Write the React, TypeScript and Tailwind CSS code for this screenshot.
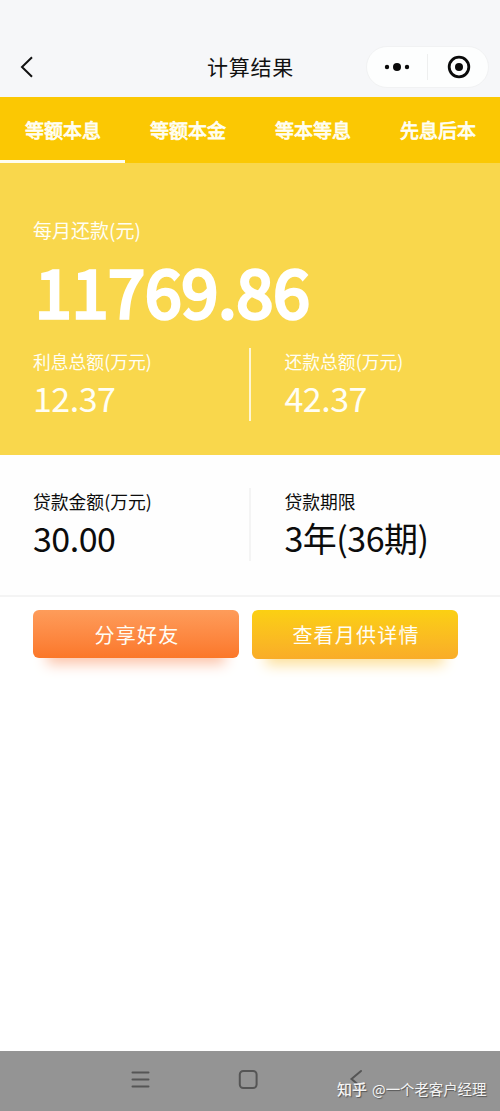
const tabs = ["等额本息", "等额本金", "等本等息", "先息后本"];

type StatProps = {
    label: string;
    value: string;
};

const Stat = ({ label, value }: StatProps) => (
    <div>
        <p className="text-[17.8px] leading-[26px] whitespace-nowrap">{label}</p>
        <p className="mt-[4px] text-[34px] leading-[40px] tracking-[-0.5px] whitespace-nowrap">{value}</p>
    </div>
);

const Header = () => (
    <header className="flex h-[97px] items-end justify-between bg-[#f6f7f9] pr-[11px] pb-[9px] pl-[20px]">
        <div className="flex h-[42px] w-[115px] items-center">
            <svg width="14" height="22" viewBox="0 0 14 22" fill="none" stroke="#111" strokeWidth="2">
                <path d="M12 1.2 2 11l10 9.8" />
            </svg>
        </div>
        <h1 className="mb-[6px] text-[21px] leading-[32px] tracking-[0.7px] text-[#111]">计算结果</h1>
        <div className="flex h-[42px] w-[123px] items-center rounded-full border border-[#f1f2f3] bg-[#fdfefe]">
            <div className="flex w-[60px] justify-center">
                <svg width="26" height="10" viewBox="0 0 26 10" fill="#0a0a0a">
                    <circle cx="3" cy="5" r="2.2" />
                    <circle cx="13" cy="5" r="4" />
                    <circle cx="23" cy="5" r="2.2" />
                </svg>
            </div>
            <div className="h-[26px] w-px bg-[#eeefef]" />
            <div className="flex flex-1 justify-center pl-[2px]">
                <svg width="24" height="24" viewBox="0 0 24 24">
                    <circle cx="12" cy="12" r="9.8" fill="none" stroke="#0a0a0a" strokeWidth="2.8" />
                    <circle cx="12" cy="12" r="4" fill="#0a0a0a" />
                </svg>
            </div>
        </div>
    </header>
);

const NavBar = () => (
    <nav className="relative h-[60px] bg-[#949494]">
        <svg className="block" width="500" height="60" viewBox="0 0 500 60" fill="none" stroke="#555" strokeWidth="2" strokeLinecap="round">
            <path d="M132.500 21.500h16M132.500 28.500h16M132.500 35.500h16" />
            <rect x="239.800" y="20" width="16.800" height="17" rx="3.500" />
            <path d="M361 20 351.500 28 361 36" />
        </svg>
        <p className="absolute top-[27px] left-[337px] flex items-center text-[14.4px] leading-[22px] whitespace-nowrap text-[#f4f4f4] [text-shadow:1px_1px_1px_#555]">
            <span className="mr-[5px] text-[15px] font-medium">知乎</span>
            <span>@一个老客户经理</span>
        </p>
    </nav>
);

const App = () => {
    return (
        <div className="flex h-[1111px] w-[500px] flex-col overflow-hidden bg-white font-['Noto_Sans_CJK_SC',sans-serif]">
            <Header />

            <div className="grid h-[66px] grid-cols-4 bg-[#fbc803] text-[#fffef4]">
                {tabs.map((tab, index) => (
                    <div
                        key={tab}
                        className={`flex items-center justify-center border-b-[3px] pt-[3px] pl-px text-[19px] [-webkit-text-stroke:0.8px_#fffef4] ${index === 0 ? "border-[#fffef0]" : "border-transparent"}`}
                    >
                        {tab}
                    </div>
                ))}
            </div>

            <section className="h-[292px] bg-[#f9d74c] pt-[53px] text-[#fffef4]">
                <p className="pl-[33px] text-[19px] leading-[28px]">每月还款(元)</p>
                <p className="h-[100px] pl-[35px] text-[66px] leading-[90px] text-white [-webkit-text-stroke:3.4px_#fff]">
                    11769.86
                </p>
                <div className="mt-[4px] flex">
                    <div className="h-[73px] w-[251px] border-r-2 border-[#fff6d2] pl-[33px]">
                        <Stat label="利息总额(万元)" value="12.37" />
                    </div>
                    <div className="pl-[33.500px]">
                        <Stat label="还款总额(万元)" value="42.37" />
                    </div>
                </div>
            </section>

            <section className="flex h-[142px] border-b-2 border-[#f4f4f4] bg-[#fefefe] pt-[33px] text-[#0c0c0c]">
                <div className="h-[73px] w-[251px] border-r-2 border-[#f4f4f4] pl-[33px]">
                    <Stat label="贷款金额(万元)" value="30.00" />
                </div>
                <div className="pl-[33.500px]">
                    <Stat label="贷款期限" value="3年(36期)" />
                </div>
            </section>

            <div className="mt-[13px] flex flex-1 items-start gap-[13px] pl-[33px] text-[20px] tracking-[1.200px] text-[#fffdf5]">
                <button className="h-[48px] w-[206px] rounded-[6px] bg-gradient-to-b from-[#fe9c5a] to-[#fb7728] pt-px pl-[2px] shadow-[0_20px_14px_-14px_#fcc3a8]">
                    分享好友
                </button>
                <button className="h-[49px] w-[206px] rounded-[6px] bg-gradient-to-b from-[#fbd012] to-[#f9ac28] pt-px pl-[2px] shadow-[0_20px_14px_-14px_#fde09a]">
                    查看月供详情
                </button>
            </div>

            <NavBar />
        </div>
    );
};

export default App;
